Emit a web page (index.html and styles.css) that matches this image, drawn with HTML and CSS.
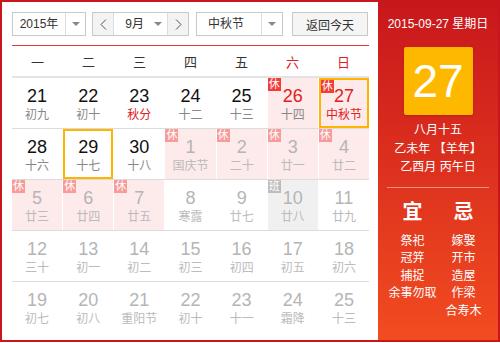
FILE: index.html
```html
<!DOCTYPE html>
<html lang="zh-CN">
<head>
    <meta charset="UTF-8">
    <meta name="viewport" content="width=device-width, initial-scale=1.0">
    <title>万年历</title>
    <link rel="stylesheet" href="styles.css">
</head>
<body>

    <div class="calendar">
        <div class="main">
            <div class="toolbar">
                <div class="select year-select">
                    <span class="select-text">2015年</span>
                    <span class="select-arrow"><i class="caret"></i></span>
                </div>
                <div class="month-group">
                    <span class="nav-btn">
                        <svg width="7" height="11" viewBox="0 0 7 11"><path d="M6 0.5 L1 5.5 L6 10.5" fill="none" stroke="#555" stroke-width="1"/></svg>
                    </span>
                    <span class="month-text">9月</span>
                    <span class="month-arrow"><i class="caret"></i></span>
                    <span class="nav-btn">
                        <svg width="7" height="11" viewBox="0 0 7 11"><path d="M1 0.5 L6 5.5 L1 10.5" fill="none" stroke="#555" stroke-width="1"/></svg>
                    </span>
                </div>
                <div class="select holiday-select">
                    <span class="select-text">中秋节</span>
                    <span class="select-arrow"><i class="caret"></i></span>
                </div>
                <button class="today-btn">返回今天</button>
            </div>

            <div class="week-head">
                <span>一</span><span>二</span><span>三</span><span>四</span><span>五</span>
                <span class="red">六</span><span class="red">日</span>
            </div>

            <div class="days">
                <div class="row">
                    <div class="cell"><b>21</b><small>初九</small></div>
                    <div class="cell"><b>22</b><small>初十</small></div>
                    <div class="cell"><b>23</b><small class="red">秋分</small></div>
                    <div class="cell"><b>24</b><small>十二</small></div>
                    <div class="cell"><b>25</b><small>十三</small></div>
                    <div class="cell rest"><i class="tag">休</i><b class="red">26</b><small>十四</small></div>
                    <div class="cell rest today"><i class="tag">休</i><b class="red">27</b><small class="red">中秋节</small></div>
                </div>
                <div class="row">
                    <div class="cell"><b>28</b><small>十六</small></div>
                    <div class="cell picked"><b>29</b><small>十七</small></div>
                    <div class="cell"><b>30</b><small>十八</small></div>
                    <div class="cell rest other"><i class="tag">休</i><b>1</b><small>国庆节</small></div>
                    <div class="cell rest other"><i class="tag">休</i><b>2</b><small>二十</small></div>
                    <div class="cell rest other"><i class="tag">休</i><b>3</b><small>廿一</small></div>
                    <div class="cell rest other"><i class="tag">休</i><b>4</b><small>廿二</small></div>
                </div>
                <div class="row">
                    <div class="cell rest other"><i class="tag">休</i><b>5</b><small>廿三</small></div>
                    <div class="cell rest other"><i class="tag">休</i><b>6</b><small>廿四</small></div>
                    <div class="cell rest other"><i class="tag">休</i><b>7</b><small>廿五</small></div>
                    <div class="cell other"><b>8</b><small>寒露</small></div>
                    <div class="cell other"><b>9</b><small>廿七</small></div>
                    <div class="cell work other"><i class="tag">班</i><b>10</b><small>廿八</small></div>
                    <div class="cell other"><b>11</b><small>廿九</small></div>
                </div>
                <div class="row">
                    <div class="cell other"><b>12</b><small>三十</small></div>
                    <div class="cell other"><b>13</b><small>初一</small></div>
                    <div class="cell other"><b>14</b><small>初二</small></div>
                    <div class="cell other"><b>15</b><small>初三</small></div>
                    <div class="cell other"><b>16</b><small>初四</small></div>
                    <div class="cell other"><b>17</b><small>初五</small></div>
                    <div class="cell other"><b>18</b><small>初六</small></div>
                </div>
                <div class="row last">
                    <div class="cell other"><b>19</b><small>初七</small></div>
                    <div class="cell other"><b>20</b><small>初八</small></div>
                    <div class="cell other"><b>21</b><small>重阳节</small></div>
                    <div class="cell other"><b>22</b><small>初十</small></div>
                    <div class="cell other"><b>23</b><small>十一</small></div>
                    <div class="cell other"><b>24</b><small>霜降</small></div>
                    <div class="cell other"><b>25</b><small>十三</small></div>
                </div>
            </div>
        </div>

        <div class="side">
            <p class="side-date">2015-09-27 星期日</p>
            <div class="big-day">27</div>
            <div class="lunar-info">
                <p>八月十五</p>
                <p>乙未年 【羊年】</p>
                <p>乙酉月 丙午日</p>
            </div>
            <div class="divider"></div>
            <div class="advice">
                <div class="advice-col">
                    <h3>宜</h3>
                    <p>祭祀</p>
                    <p>冠笄</p>
                    <p>捕捉</p>
                    <p>余事勿取</p>
                </div>
                <div class="advice-col">
                    <h3>忌</h3>
                    <p>嫁娶</p>
                    <p>开市</p>
                    <p>造屋</p>
                    <p>作梁</p>
                    <p>合寿木</p>
                </div>
            </div>
        </div>
    </div>

</body>
</html>
```

FILE: styles.css
```css
* {
    margin: 0;
    padding: 0;
    box-sizing: border-box;
    font-family: "Liberation Sans", Arial, "Noto Sans CJK SC", sans-serif;
}

body {
    background: white;
}

.calendar {
    width: 500px;
    height: 342px;
    border: 2px solid #c8161d;
    display: flex;
}

.main {
    width: 376px;
    padding: 10px 9px 0 10px;
}

/* top controls */
.toolbar {
    display: flex;
    height: 24px;
}

.select, .month-group {
    display: flex;
    border: 1px solid #c8c8c8;
    background: white;
    font-size: 12px;
    color: #333;
    line-height: 22px;
}

.year-select {
    width: 74px;
}

.year-select .select-text {
    width: 52px;
    text-align: center;
}

.select-arrow, .month-arrow {
    flex: 1;
    display: flex;
    align-items: center;
    justify-content: center;
}

.select-arrow {
    border-left: 1px solid #ddd;
}

.caret {
    width: 0;
    height: 0;
    border-left: 4px solid transparent;
    border-right: 4px solid transparent;
    border-top: 4px solid #888;
}

.month-group {
    width: 97px;
    margin-left: 6px;
}

.nav-btn {
    width: 21px;
    background: #f3f3f3;
    display: flex;
    align-items: center;
    justify-content: center;
}

.nav-btn:first-child {
    border-right: 1px solid #ddd;
}

.nav-btn:last-child {
    border-left: 1px solid #ddd;
}

.month-text {
    width: 34px;
    text-align: right;
    padding-right: 4px;
}

.holiday-select {
    width: 87px;
    margin-left: 7px;
}

.holiday-select .select-text {
    width: 64px;
    padding-left: 11px;
}

.today-btn {
    width: 76px;
    margin-left: 9px;
    border: 1px solid #c8c8c8;
    background: #f5f5f5;
    font-size: 12px;
    color: #333;
}

/* week header */
.week-head {
    margin-top: 9px;
    border-top: 1px solid #e4393c;
    border-bottom: 2px solid #e3e3e3;
    height: 33px;
    display: grid;
    grid-template-columns: repeat(7, 1fr);
    align-items: center;
    text-align: center;
    font-size: 13px;
    color: #333;
}

.red {
    color: #e02020 !important;
}

/* day grid */
.row {
    display: grid;
    grid-template-columns: repeat(7, 1fr);
    column-gap: 1px;
    height: 51px;
    border-bottom: 1px solid #dcdcdc;
}

.row.last {
    border-bottom: none;
}

.cell {
    position: relative;
    display: flex;
    flex-direction: column;
    align-items: center;
    padding-top: 8px;
}

.cell b {
    font-size: 18px;
    font-weight: normal;
    line-height: 21px;
    color: #111;
}

.cell small {
    font-size: 12px;
    line-height: 16px;
    color: #888;
}

.cell.rest {
    background: #fdeaea;
}

.cell.work {
    background: #f0f0f0;
}

.cell.other b {
    color: #b5b5b5;
}

.cell.other small {
    color: #bbb;
}

.tag {
    position: absolute;
    left: 0;
    top: 0;
    width: 13px;
    height: 13px;
    background: #f23c3c;
    color: white;
    font-size: 11px;
    font-style: normal;
    line-height: 13px;
    text-align: center;
}

.other .tag {
    background: #f79a9a;
}

.work .tag {
    background: #bdbdbd;
}

.today, .picked {
    border: 2px solid #ffb400;
    padding-top: 6px;
}

/* right panel */
.side {
    width: 120px;
    background: linear-gradient(#c8171c, #f24c20);
    color: white;
    display: flex;
    flex-direction: column;
    align-items: center;
}

.side-date {
    font-size: 12px;
    margin-top: 15px;
    line-height: 14px;
}

.big-day {
    width: 69px;
    height: 68px;
    margin-top: 16px;
    background: #ffb800;
    border-radius: 2px;
    font-size: 46px;
    line-height: 68px;
    text-align: center;
    box-shadow: 0 1px 2px rgba(120, 20, 0, 0.3);
}

.lunar-info {
    margin-top: 6px;
    text-align: center;
    font-size: 12px;
    line-height: 18.5px;
}

.divider {
    width: 102px;
    height: 1px;
    background: rgba(255, 255, 255, 0.45);
    margin-top: 10px;
}

.advice {
    display: flex;
    width: 102px;
    margin-top: 11px;
}

.advice-col {
    width: 51px;
    text-align: center;
    font-size: 12px;
    line-height: 17.5px;
}

.advice-col h3 {
    font-size: 20px;
    line-height: 26px;
    margin-bottom: 8px;
}
```
